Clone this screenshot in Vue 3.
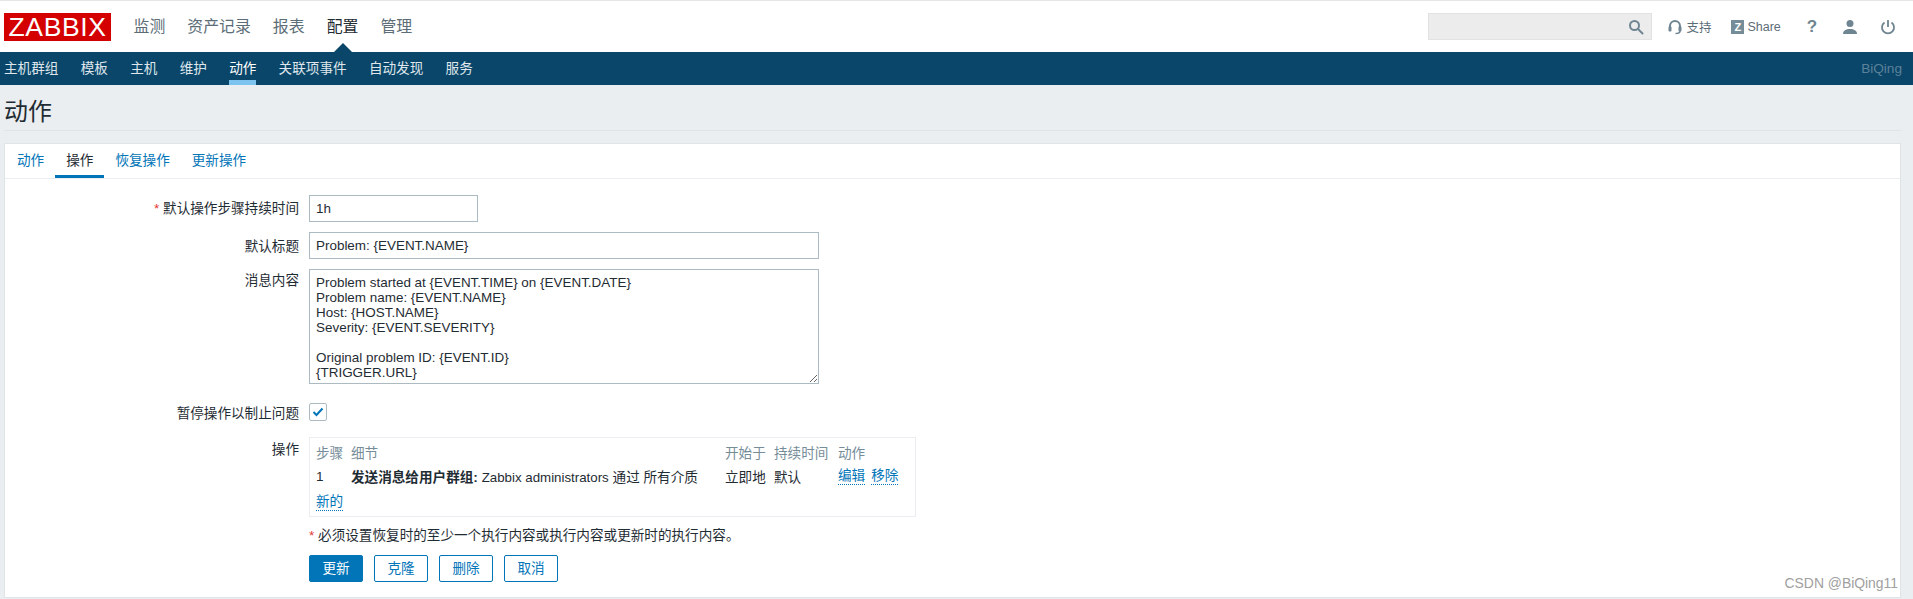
<script setup>
const topItems = ['监测', '资产记录', '报表', '配置', '管理']
const subItems = ['主机群组', '模板', '主机', '维护', '动作', '关联项事件', '自动发现', '服务']
const tabs = ['动作', '操作', '恢复操作', '更新操作']
const message = `Problem started at {EVENT.TIME} on {EVENT.DATE}
Problem name: {EVENT.NAME}
Host: {HOST.NAME}
Severity: {EVENT.SEVERITY}

Original problem ID: {EVENT.ID}
{TRIGGER.URL}`
</script>

<template>
  <div class="page">
    <header class="top">
      <div class="logo">ZABBIX</div>
      <nav class="top-nav">
        <span v-for="t in topItems" :key="t" class="top-item" :class="{ on: t === '配置' }">{{ t }}</span>
      </nav>
      <div class="top-right">
        <div class="search">
          <svg width="16" height="16" viewBox="0 0 16 16" fill="none" stroke="#6f8592" stroke-width="2"><circle cx="6.5" cy="6.5" r="4.5"/><path d="M10 10l4.5 4.5" stroke-linecap="round"/></svg>
        </div>
        <span class="tool support">
          <svg width="14" height="16" viewBox="0 0 14 16" fill="none"><path d="M2 9V7a5 5 0 0 1 10 0v2" stroke="#6f8592" stroke-width="2"/><rect x="0.5" y="7.5" width="3" height="5" rx="1" fill="#6f8592"/><rect x="10.5" y="7.5" width="3" height="5" rx="1" fill="#6f8592"/><path d="M12 12c0 2-2 2.500-4.500 2.500" stroke="#6f8592" stroke-width="1.500"/></svg>
          支持
        </span>
        <span class="tool share"><i class="zbox">Z</i>Share</span>
        <span class="q">?</span>
        <svg class="user" width="16" height="16" viewBox="0 0 16 16" fill="#6f8592"><circle cx="8" cy="4.500" r="3.500"/><path d="M1 15c0-3.500 3-5 7-5s7 1.500 7 5z"/></svg>
        <svg class="power" width="16" height="16" viewBox="0 0 16 16" fill="none" stroke="#6f8592" stroke-width="1.800"><path d="M4.500 3.500a6 6 0 1 0 7 0"/><path d="M8 1v7"/></svg>
      </div>
    </header>

    <nav class="sub">
      <span v-for="s in subItems" :key="s" class="sub-item" :class="{ on: s === '动作' }">{{ s }}</span>
      <span class="who">BiQing</span>
    </nav>

    <main class="body">
      <h1 class="title">动作</h1>
      <section class="card">
        <div class="tabs">
          <span v-for="t in tabs" :key="t" class="tab" :class="{ on: t === '操作' }">{{ t }}</span>
        </div>
        <form class="form">
          <div class="row r1">
            <label class="lab"><b class="req">*</b> 默认操作步骤持续时间</label>
            <input class="inp short" value="1h" />
          </div>
          <div class="row r2">
            <label class="lab">默认标题</label>
            <input class="inp long" value="Problem: {EVENT.NAME}" />
          </div>
          <div class="row r3">
            <label class="lab">消息内容</label>
            <textarea class="inp area" :value="message"></textarea>
          </div>
          <div class="row r4">
            <label class="lab">暂停操作以制止问题</label>
            <span class="check">
              <svg width="12" height="10" viewBox="0 0 12 10" fill="none" stroke="#0275b8" stroke-width="2"><path d="M1.500 5l3 3 6-6.500"/></svg>
            </span>
          </div>
          <div class="row r5">
            <label class="lab">操作</label>
            <div class="ops">
              <div class="ops-grid">
                <span class="th">步骤</span><span class="th">细节</span><span class="th">开始于</span><span class="th">持续时间</span><span class="th">动作</span>
                <span>1</span>
                <span><b>发送消息给用户群组:</b> <span class="latin">Zabbix administrators</span> 通过 所有介质</span>
                <span>立即地</span><span>默认</span>
                <span class="links"><a class="lnk">编辑</a><a class="lnk">移除</a></span>
              </div>
              <a class="lnk new">新的</a>
            </div>
          </div>
          <p class="hint"><b class="req">*</b> 必须设置恢复时的至少一个执行内容或执行内容或更新时的执行内容。</p>
          <div class="btns">
            <button type="button" class="btn primary">更新</button>
            <button type="button" class="btn">克隆</button>
            <button type="button" class="btn">删除</button>
            <button type="button" class="btn">取消</button>
          </div>
        </form>
        <span class="mark">CSDN @BiQing11</span>
      </section>
    </main>
  </div>
</template>

<style>
html, body { margin: 0; background: #ebeef0; }
</style>

<style scoped>
.page {
  height: 599px;
  overflow: hidden;
  background: #ebeef0;
  color: #1f2c33;
  font-family: "Liberation Sans", "Noto Sans CJK SC", sans-serif;
  font-size: 13.6px;
}
.latin { font-size: 13.3px; }
.top {
  box-sizing: border-box;
  height: 52px;
  border-top: 1px solid #e6e6e6;
  background: #fff;
  display: flex;
  align-items: center;
  padding-left: 4px;
}
.logo {
  width: 107px;
  height: 28px;
  margin-top: 1px;
  background: #d40000;
  color: #fff;
  font-size: 26.5px;
  line-height: 28px;
  text-align: center;
  letter-spacing: 0.6px;
}
.top-nav { display: flex; gap: 22px; margin-left: 22.5px; }
.top-item { position: relative; font-size: 15.9px; color: #5c6d77; line-height: 50px; }
.top-item.on { color: #1f2c33; }
.top-item.on::after {
  content: "";
  position: absolute;
  left: 50%;
  bottom: -1px;
  margin-left: -10px;
  border: 10px solid transparent;
  border-top: 0;
  border-bottom-color: #0a466a;
}
.top-right { margin-left: auto; display: flex; align-items: center; color: #5c6d77; }
.search {
  box-sizing: border-box;
  width: 224px;
  height: 27px;
  background: #ececec;
  border: 1px solid #e2e2e2;
  display: flex;
  align-items: center;
  justify-content: flex-end;
  padding-right: 7px;
}
.tool { display: inline-flex; align-items: center; font-size: 12.5px; color: #5c6d77; }
.support { margin-left: 16px; gap: 4px; width: 43px; white-space: nowrap; }
.share { margin-left: 20px; gap: 3px; }
.zbox {
  width: 13px;
  height: 14px;
  background: #768d99;
  color: #fff;
  font-style: normal;
  font-weight: 700;
  font-size: 11px;
  line-height: 14px;
  text-align: center;
}
.q { margin-left: 26px; font-size: 17px; font-weight: 700; color: #6f8592; }
.user { margin-left: 24.8px; }
.power { margin-left: 22px; margin-right: 17px; }
.sub {
  height: 33px;
  background: #0a466a;
  display: flex;
  padding-left: 4px;
  gap: 22.3px;
}
.sub-item {
  box-sizing: border-box;
  height: 33px;
  line-height: 33px;
  color: #dfe7ec;
  white-space: nowrap;
}
.sub-item.on { color: #fff; border-bottom: 5px solid #7cc3f0; }
.who { margin-left: auto; margin-right: 11px; line-height: 33px; color: #5c8299; }
.body { padding: 0 12px 0 4px; }
.title {
  margin: 0;
  height: 45px;
  border-bottom: 1px solid #dfe4e7;
  font-size: 23.900px;
  font-weight: 400;
  line-height: 53px;
  color: #1f2c33;
}
.card {
  position: relative;
  box-sizing: border-box;
  height: 455px;
  margin-top: 12px;
  background: #fff;
  border: 1px solid #dfe4e7;
}
.tabs {
  box-sizing: border-box;
  height: 35px;
  display: flex;
  padding-left: 1px;
  border-bottom: 1px solid #ebeef0;
}
.tab {
  box-sizing: border-box;
  height: 34px;
  line-height: 33px;
  padding: 0 11px;
  color: #0275b8;
}
.tab.on { color: #1f2c33; border-bottom: 3px solid #0275b8; }
.form { padding-left: 304px; }
.row { display: flex; position: relative; }
.lab {
  position: absolute;
  right: calc(100% + 10px);
  white-space: nowrap;
  color: #1f2c33;
}
.req { color: #e33734; font-weight: 400; }
.r1 { margin-top: 16px; }
.r1 .lab { top: 2px; }
.r2 .lab { top: 3px; }
.r2, .r3 { margin-top: 10px; }
.r3 .lab { top: 0; }
.r4 { margin-top: 19px; }
.r4 .lab { top: -1px; }
.r5 { margin-top: 16px; }
.r5 .lab { top: 1px; }
.inp {
  box-sizing: border-box;
  display: block;
  border: 1px solid #acbbc2;
  background: #fff;
  color: #1f2c33;
  font-family: inherit;
  font-size: 13.45px;
  padding: 0 6px;
  outline: none;
  height: 27px;
}
.short { width: 169px; }
.long { width: 510px; }
.area {
  width: 510px;
  height: 115px;
  padding: 5px 6px;
  line-height: 15px;
  resize: both;
  overflow: hidden;
}
.check {
  box-sizing: border-box;
  width: 18px;
  height: 18px;
  border: 1px solid #acbbc2;
  border-radius: 2px;
  display: flex;
  align-items: center;
  justify-content: center;
}
.ops {
  box-sizing: border-box;
  width: 607px;
  height: 80px;
  border: 1px solid #ebeef0;
  padding: 1.5px 6px;
}
.ops-grid {
  display: grid;
  grid-template-columns: 35px 374px 49px 64px 1fr;
  grid-auto-rows: 24.5px;
  align-items: center;
  white-space: nowrap;
}
.th { color: #768d99; }
.links { display: flex; gap: 6px; }
.lnk {
  color: #0275b8;
  border-bottom: 1px dotted #0275b8;
  line-height: 17px;
}
.new { display: inline-block; margin-top: 4px; }
.hint { margin: 10px 0 0; height: 18px; line-height: 18px; }
.btns { display: flex; gap: 11px; margin-top: 10px; }
.btn {
  box-sizing: border-box;
  width: 54px;
  height: 27px;
  padding: 0 0 3px;
  border: 1px solid #0275b8;
  border-radius: 2px;
  background: #fff;
  color: #0275b8;
  font: inherit;
}
.primary { background: #0275b8; color: #fff; }
.mark {
  position: absolute;
  right: 2px;
  bottom: 6px;
  font-size: 13.900px;
  color: #a0a0a0;
}
</style>
